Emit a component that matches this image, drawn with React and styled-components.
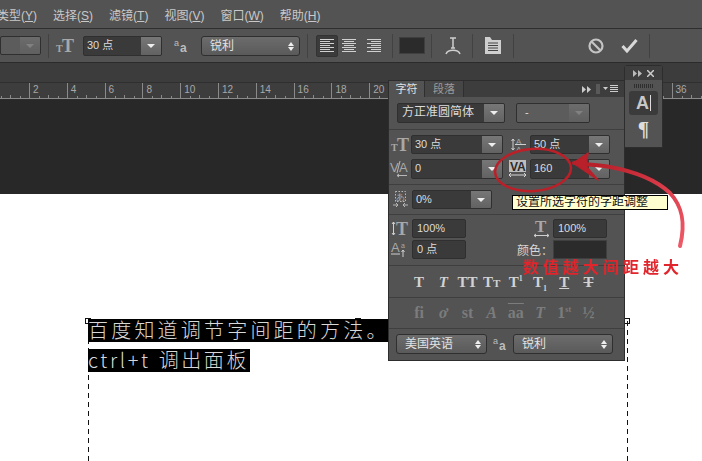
import React from 'react';
import styled, { createGlobalStyle } from 'styled-components';

const sans = '"Noto Sans CJK SC", "Liberation Sans", sans-serif';
const serif = '"Liberation Serif", "Noto Sans CJK SC", serif';

const Global = createGlobalStyle`
  html, body { margin: 0; padding: 0; background: #fff; }
  * { box-sizing: border-box; }
`;

const Stage = styled.div`
  position: relative;
  width: 702px;
  height: 461px;
  overflow: hidden;
  display: flex;
  flex-direction: column;
  font-family: "Liberation Sans", ${sans};
  font-size: 11px;
  color: #d6d6d6;
`;

const MenuBar = styled.div`
  height: 29px;
  flex: none;
  display: flex;
  align-items: center;
  gap: 16px;
  padding-left: 0;
  background: #535353;
  border-bottom: 1px solid #2e2e2e;
  color: #c9c9c9;
  font-size: 12px;
`;

const MenuItem = styled.span`
  white-space: nowrap;
  &:first-child { margin-left: -3px; }
  u { text-underline-offset: 1px; }
`;

const Options = styled.div`
  height: 34px;
  flex: none;
  display: flex;
  align-items: center;
  background: #535353;
  border-bottom: 1px solid #2b2b2b;
`;

const Sep = styled.div`
  width: 1px;
  height: 24px;
  flex: none;
  margin-left: ${p => p.$ml}px;
  background: #424242;
`;

const OptSlot = styled.div`
  flex: none;
  margin-left: ${p => p.$ml || 0}px;
  display: flex;
  align-items: center;
`;

const Field = styled.div`
  flex: none;
  display: flex;
  align-items: stretch;
  width: ${p => p.$w}px;
  height: ${p => p.$h || 19}px;
  margin-left: ${p => p.$ml || 0}px;
  background: ${p => p.$muted ? '#5c5c5c' : '#3a3a3a'};
  border: 1px solid #2f2f2f;
  border-radius: 2px;
  color: #dcdcdc;
  font-size: 11px;
  overflow: hidden;
`;

const FieldText = styled.span`
  flex: 1;
  min-width: 0;
  padding-left: ${p => p.$pad || 3}px;
  line-height: 17px;
  white-space: nowrap;
  font-size: ${p => p.$size || 11}px;
`;

const DropButton = styled.span`
  flex: none;
  width: ${p => p.$w || 20}px;
  display: flex;
  align-items: center;
  justify-content: center;
  background: linear-gradient(#777, #626262);
  opacity: ${p => p.$dim ? 0.6 : 1};
  &::after {
    content: "";
    border-left: 4px solid transparent;
    border-right: 4px solid transparent;
    border-top: 4px solid ${p => p.$dim ? '#999' : '#eee'};
  }
`;

const SelectBox = styled.div`
  flex: none;
  position: relative;
  width: ${p => p.$w}px;
  height: ${p => p.$h || 20}px;
  margin-left: ${p => p.$ml || 0}px;
  padding-left: ${p => p.$pad || 8}px;
  background: linear-gradient(#6c6c6c, #5a5a5a);
  border: 1px solid #2f2f2f;
  border-radius: 3px;
  color: #e2e2e2;
  font-size: 12px;
  line-height: 18px;
  white-space: nowrap;
  &::before, &::after {
    content: "";
    position: absolute;
    right: 5px;
    border-left: 3px solid transparent;
    border-right: 3px solid transparent;
  }
  &::before { top: 5px; border-bottom: 4px solid #eee; }
  &::after { top: 10px; border-top: 4px solid #eee; }
`;

const AlignButton = styled.div`
  flex: none;
  width: ${p => p.$active ? 22 : 17}px;
  height: 22px;
  margin-left: ${p => p.$ml || 0}px;
  display: flex;
  align-items: center;
  justify-content: center;
  border-radius: 2px;
  background: ${p => p.$active ? '#3b3b3b' : 'transparent'};
  border: ${p => p.$active ? '1px solid #333' : 'none'};
`;

const Swatch = styled.div`
  flex: none;
  width: ${p => p.$w}px;
  height: ${p => p.$h}px;
  margin-left: ${p => p.$ml || 0}px;
  background: #2b2b2b;
  border: 1px solid #3f3f3f;
`;

const Tabstrip = styled.div`
  height: 19px;
  flex: none;
  background: #3c3c3c;
`;

const Ruler = styled.div`
  height: 18px;
  flex: none;
  display: flex;
  overflow: hidden;
  background: #3d3d3d;
  border-top: 1px solid #2f2f2f;
  border-bottom: 1px solid #2b2b2b;
`;

const RulerCell = styled.div`
  flex: none;
  width: 37.8px;
  height: 16px;
  padding-left: 3px;
  border-left: 1px solid #8a8a8a;
  font-size: 10px;
  line-height: 13px;
  color: #a8a8a8;
  background-image: linear-gradient(#8a8a8a, #8a8a8a), linear-gradient(#8a8a8a, #8a8a8a), linear-gradient(#8a8a8a, #8a8a8a), linear-gradient(#8a8a8a, #8a8a8a);
  background-size: 1px 3px, 1px 4px, 1px 3px, 100% 1px;
  background-position: 9px 13px, 18px 12px, 28px 13px, 0 15px;
  background-repeat: no-repeat;
  &:first-child { margin-left: -8.8px; }
`;

const Canvas = styled.div`
  height: 94px;
  flex: none;
  background: #282828;
`;

const Doc = styled.div`
  flex: 1;
  position: relative;
  background: #fff;
`;

const dashes = 'repeating-linear-gradient(#111 0 5px, transparent 5px 9px)';

const Frame = styled.div`
  position: absolute;
  left: 88px;
  top: 127px;
  width: 540px;
  height: 160px;
  &::before, &::after {
    content: "";
    position: absolute;
    top: 0;
    bottom: 0;
    width: 1px;
    background: ${dashes};
  }
  &::before { left: 0; }
  &::after { right: 0; }
`;

const Handle = styled.i`
  position: absolute;
  top: -3px;
  left: ${p => p.$x}px;
  width: 6px;
  height: 6px;
  background: #fff;
  border: 1px solid #111;
`;

const Selected = styled.div`
  position: absolute;
  left: 0;
  top: ${p => p.$top}px;
  width: ${p => p.$w}px;
  height: 23px;
  background: #000;
  color: #d8d8d8;
  font-family: ${sans};
  font-weight: 300;
  font-size: 20px;
  line-height: 22px;
  letter-spacing: ${p => p.$track}px;
  word-spacing: ${p => p.$word || 0}px;
  white-space: nowrap;
`;

const Panel = styled.div`
  position: absolute;
  left: 388px;
  top: 80px;
  width: 237px;
  height: 281px;
  background: #535353;
  border: 1px solid #2d2d2d;
  border-top: none;
  display: flex;
  flex-direction: column;
`;

const PanelTabs = styled.div`
  height: 17px;
  flex: none;
  display: flex;
  align-items: stretch;
  background: #3d3d3d;
  border-top: 1px solid #2d2d2d;
`;

const PanelTab = styled.div`
  width: ${p => p.$w}px;
  text-align: center;
  line-height: 16px;
  font-size: 11px;
  color: ${p => p.$active ? '#e2e2e2' : '#9a9a9a'};
  background: ${p => p.$active ? '#535353' : '#464646'};
  border-right: 1px solid #2f2f2f;
`;

const TabTools = styled.div`
  margin-left: auto;
  display: flex;
  align-items: center;
  gap: 5px;
  padding-right: 4px;
`;

const Section = styled.div`
  flex: none;
  display: flex;
  flex-direction: column;
  gap: ${p => p.$gap || 0}px;
  padding: ${p => p.$top}px 0 ${p => p.$bottom}px ${p => p.$left || 0}px;
  border-bottom: ${p => p.$last ? 'none' : '1px solid #3f3f3f'};
`;

const Row = styled.div`
  display: flex;
  align-items: center;
  height: ${p => p.$h || 19}px;
`;

const IconSlot = styled.div`
  flex: none;
  width: 16px;
  height: 18px;
  margin-left: ${p => p.$ml || 0}px;
  display: flex;
  align-items: center;
  justify-content: center;
`;

const PanelLabel = styled.span`
  flex: none;
  width: 36px;
  margin-left: ${p => p.$ml}px;
  font-size: 12px;
  color: #d8d8d8;
  white-space: nowrap;
`;

const GlyphRow = styled.div`
  display: flex;
  height: 15px;
  padding-left: ${p => p.$left}px;
`;

const Glyph = styled.span`
  flex: none;
  width: 24.2px;
  text-align: center;
  font-family: ${serif};
  font-weight: 700;
  font-style: ${p => p.$italic ? 'italic' : 'normal'};
  font-size: ${p => p.$dim ? 16 : 15}px;
  line-height: 15px;
  color: ${p => p.$dim ? '#7c7c7c' : '#d2d2d2'};
  text-decoration: ${p => p.$deco || 'none'};
  white-space: nowrap;
  sup, sub { font-size: 8px; line-height: 0; }
  small { font-size: 11px; }
`;

const Dock = styled.div`
  position: absolute;
  left: 624px;
  top: 65px;
  width: 39px;
  height: 83px;
  display: flex;
  flex-direction: column;
  align-items: center;
  background: #535353;
  border: 1px solid #2d2d2d;
  border-radius: 3px 3px 0 0;
`;

const DockHead = styled.div`
  width: 100%;
  height: 14px;
  flex: none;
  display: flex;
  align-items: center;
  justify-content: space-between;
  padding: 0 8px;
  background: #3e3e3e;
`;

const Grip = styled.div`
  width: 20px;
  height: 4px;
  margin-top: 4px;
  flex: none;
  background: repeating-linear-gradient(90deg, #2e2e2e 0 1px, transparent 1px 2px);
`;

const DockButton = styled.div`
  width: 29px;
  height: 24px;
  margin-top: 3px;
  flex: none;
  display: flex;
  align-items: center;
  justify-content: center;
  background: #3b3b3b;
  border-radius: 3px;
  color: #c8c8c8;
  font-size: 18px;
  font-weight: 700;
  span { border-right: 1px solid #ddd; padding-right: 1px; line-height: 16px; }
`;

const DockPara = styled.div`
  margin-top: 3px;
  color: #dcdcdc;
  font-family: ${serif};
  font-weight: 700;
  font-size: 21px;
  line-height: 22px;
`;

const Tooltip = styled.div`
  position: absolute;
  left: 512px;
  top: 195px;
  width: 156px;
  height: 15px;
  padding-left: 3px;
  background: #ffffcf;
  border: 1px solid #000;
  color: #111;
  font-size: 12px;
  line-height: 13px;
  white-space: nowrap;
`;

const Ink = styled.svg`
  position: absolute;
  left: 0;
  top: 0;
  pointer-events: none;
  filter: blur(0.4px);
`;

const Note = styled.div`
  position: absolute;
  left: 523px;
  top: 256px;
  color: #e0262c;
  font-size: 16px;
  font-weight: 700;
  line-height: 24px;
  letter-spacing: 4px;
  white-space: nowrap;
  filter: blur(0.5px);
`;

const IconSvg = styled.svg`
  display: block;
  overflow: visible;
  text {
    font-family: ${serif};
    font-weight: 700;
    fill: ${p => p.$fill || '#a8a8a8'};
  }
`;

const thinSans = { fontFamily: '"Liberation Sans"', fontWeight: 400 };

const SizeIcon = () => (
  <IconSvg width="17" height="16">
    <text x="0" y="14" fontSize="10">T</text>
    <text x="6" y="14" fontSize="18">T</text>
  </IconSvg>
);

const LeadingIcon = () => (
  <IconSvg width="17" height="17" fill="none" stroke="#cfcfcf">
    <text x="6" y="8" fontSize="8" stroke="none" style={thinSans}>A</text>
    <text x="6" y="16" fontSize="8" stroke="none" style={thinSans}>A</text>
    <path d="M3 3v11M1.500 5L3 3l1.500 2M1.500 12L3 14l1.500-2M5 8.500h11" />
  </IconSvg>
);

const KernIcon = () => (
  <IconSvg width="18" height="18" fill="none" stroke="#b8b8b8">
    <text x="0" y="12" fontSize="13" stroke="none" style={thinSans}>V</text>
    <text x="9" y="12" fontSize="13" stroke="none" style={thinSans}>A</text>
    <path d="M10 1L7 13M7 15.500h10M9 14l-2 1.500L9 17" />
  </IconSvg>
);

const TrackIcon = () => (
  <IconSvg width="18" height="18" fill="none" stroke="#d8d8d8">
    <rect x="0" y="0" width="17" height="12" fill="#bdbdbd" stroke="none" />
    <text x="1" y="11" fontSize="12" stroke="none" style={{ fill: '#2a2a2a', fontFamily: '"Liberation Sans"' }}>VA</text>
    <path d="M0 15h17M2 13l-2 2 2 2M15 13l2 2-2 2" />
  </IconSvg>
);

const TsumeIcon = () => (
  <IconSvg width="15" height="17" fill="none" stroke="#b8b8b8">
    <rect x="2.500" y="0.500" width="10" height="10" strokeDasharray="1.500 1.500" />
    <text x="3" y="9" fontSize="9" stroke="none" style={thinSans}>あ</text>
    <path d="M0 14h5M3 12l2 2-2 2M15 14h-5M12 12l-2 2 2 2" />
  </IconSvg>
);

const VScaleIcon = () => (
  <IconSvg width="17" height="17" fill="none" stroke="#cfcfcf">
    <path d="M2.500 2v13M1 4l1.500-2L4 4M1 13l1.500 2L4 13" />
    <text x="5" y="15" fontSize="18" stroke="none">T</text>
  </IconSvg>
);

const HScaleIcon = () => (
  <IconSvg width="17" height="18" fill="none" stroke="#cfcfcf">
    <text x="2" y="12" fontSize="17" stroke="none">T</text>
    <path d="M1 15.500h15M3 14l-2 1.500L3 17M14 14l2 1.500-2 1.500" />
  </IconSvg>
);

const BaselineIcon = () => (
  <IconSvg width="16" height="17" fill="none" stroke="#cfcfcf">
    <text x="0" y="11" fontSize="13" stroke="none" style={thinSans}>A</text>
    <text x="10" y="7" fontSize="7" stroke="none" style={thinSans}>a</text>
    <path d="M0 13h9M12 9v7M10.500 11L12 9l1.500 2" />
  </IconSvg>
);

const AaIcon = () => (
  <IconSvg width="15" height="14" $fill="#bdbdbd">
    <text x="0" y="7" fontSize="9" style={thinSans}>a</text>
    <text x="6" y="13" fontSize="12" style={{ fontFamily: '"Liberation Sans"' }}>a</text>
  </IconSvg>
);

const AlignIcon = ({ side }) => {
  const widths = [14, 10, 14, 10, 14, 10, 14];
  return (
    <svg width="15" height="14">
      {widths.map((w, i) => {
        const x = side === 'left' ? 0 : side === 'center' ? (14 - w) / 2 : 14 - w;
        return <rect key={i} x={x} y={i * 2} width={w} height="1" fill="#d0d0d0" />;
      })}
    </svg>
  );
};

const ForwardIcon = ({ color }) => (
  <svg width="9" height="7">
    <path d="M0 0l4 3.500L0 7zM5 0l4 3.500L5 7z" fill={color} />
  </svg>
);

const PanelMenuIcon = () => (
  <svg width="24" height="10">
    <path d="M1 0v10M3 0v10" stroke="#777" />
    <path d="M7 3h5l-2.500 3z" fill="#ccc" />
    <path d="M14 1.500h8M14 3.500h8M14 5.500h8M14 7.500h8" stroke="#ccc" />
  </svg>
);

const WarpIcon = () => (
  <svg width="16" height="20" fill="none" stroke="#cfcfcf">
    <path d="M5 2h6M8 2v10M6 12h4" strokeWidth="1.500" />
    <path d="M1 18c2-5 12-5 14 0" strokeWidth="1.500" />
  </svg>
);

const CharPanelIcon = () => (
  <svg width="16" height="17">
    <path d="M0 0h5l2 3h9v14H0z" fill="#cfcfcf" />
    <path d="M3 6h10M3 8.500h10M3 11h10M3 13.500h10" stroke="#444" />
  </svg>
);

const CancelIcon = () => (
  <svg width="16" height="16" fill="none" stroke="#c4c4c4" strokeWidth="2.200">
    <circle cx="8" cy="8" r="6.500" />
    <path d="M3.500 3.500l9 9" />
  </svg>
);

const CheckIcon = () => (
  <svg width="17" height="15" fill="none" stroke="#d8d8d8" strokeWidth="3">
    <path d="M1.500 8l4.500 5L15.500 2" />
  </svg>
);

const menus = [['类型', 'Y'], ['选择', 'S'], ['滤镜', 'T'], ['视图', 'V'], ['窗口', 'W'], ['帮助', 'H']];
// 22 to 34 sit under the floating panels, so they carry no label
const marks = ['', '2', '4', '6', '8', '10', '12', '14', '16', '18', '20', '', '', '', '', '', '', '', '36'];

const styleGlyphs = [
  { c: 'T' },
  { c: 'T', italic: true },
  { c: 'TT' },
  { c: <>T<small>T</small></> },
  { c: <>T<sup>1</sup></> },
  { c: <>T<sub>1</sub></> },
  { c: 'T', deco: 'underline' },
  { c: 'T', deco: 'line-through' },
];
const otGlyphs = [
  { c: 'fi' },
  { c: 'ơ', italic: true },
  { c: 'st' },
  { c: 'A', italic: true },
  { c: 'aa', deco: 'overline' },
  { c: 'T', italic: true },
  { c: <>1<sup>st</sup></> },
  { c: '½' },
];

export default function App() {
  return (
    <Stage>
      <Global />
      <MenuBar>
        {menus.map(([name, key]) => (
          <MenuItem key={key}>{name}(<u>{key}</u>)</MenuItem>
        ))}
      </MenuBar>

      <Options>
        <Field $w={41} $h={19} $muted>
          <FieldText />
          <DropButton $dim />
        </Field>
        <Sep $ml={7} />
        <OptSlot $ml={7}><SizeIcon /></OptSlot>
        <Field $w={79} $h={20} $ml={10}>
          <FieldText>30 点</FieldText>
          <DropButton />
        </Field>
        <OptSlot $ml={12}><AaIcon /></OptSlot>
        <SelectBox $w={99} $ml={12}>锐利</SelectBox>
        <Sep $ml={7} />
        <AlignButton $active $ml={8}><AlignIcon side="left" /></AlignButton>
        <AlignButton $ml={3}><AlignIcon side="center" /></AlignButton>
        <AlignButton $ml={8}><AlignIcon side="right" /></AlignButton>
        <Sep $ml={9} />
        <Swatch $w={26} $h={17} $ml={6} />
        <Sep $ml={6} />
        <OptSlot $ml={13}><WarpIcon /></OptSlot>
        <Sep $ml={11} />
        <OptSlot $ml={12}><CharPanelIcon /></OptSlot>
        <Sep $ml={12} />
        <OptSlot $ml={74}><CancelIcon /></OptSlot>
        <OptSlot $ml={17}><CheckIcon /></OptSlot>
        <Sep $ml={11} />
      </Options>

      <Tabstrip />

      <Ruler>
        {marks.map((m, i) => (
          <RulerCell key={i}>{m}</RulerCell>
        ))}
      </Ruler>

      <Canvas />

      <Doc>
        <Frame>
          <Handle $x={-3} />
          <Handle $x={267} />
          <Handle $x={536} />
          <Selected $top={-2} $w={300} $track={3.2}>百度知道调节字间距的方法。</Selected>
          <Selected $top={28} $w={162} $track={2.6} $word={1}>ctrl+t 调出面板</Selected>
        </Frame>
      </Doc>

      <Panel>
        <PanelTabs>
          <PanelTab $active $w={36}>字符</PanelTab>
          <PanelTab $w={39}>段落</PanelTab>
          <TabTools>
            <ForwardIcon color="#ccc" />
            <PanelMenuIcon />
          </TabTools>
        </PanelTabs>

        <Section $top={6} $bottom={6} $left={8}>
          <Row $h={20}>
            <Field $w={108} $h={20}>
              <FieldText $pad={4} $size={12}>方正准圆简体</FieldText>
              <DropButton />
            </Field>
            <Field $w={74} $h={20} $ml={11} $muted>
              <FieldText $pad={8}>-</FieldText>
              <DropButton $dim />
            </Field>
          </Row>
        </Section>

        <Section $top={5} $bottom={5} $left={2} $gap={5}>
          <Row>
            <IconSlot><SizeIcon /></IconSlot>
            <Field $w={92} $ml={4}><FieldText>30 点</FieldText><DropButton /></Field>
            <IconSlot $ml={7}><LeadingIcon /></IconSlot>
            <Field $w={80} $ml={4}><FieldText>50 点</FieldText><DropButton /></Field>
          </Row>
          <Row $h={20}>
            <IconSlot><KernIcon /></IconSlot>
            <Field $w={92} $h={20} $ml={4}><FieldText>0</FieldText><DropButton /></Field>
            <IconSlot $ml={7}><TrackIcon /></IconSlot>
            <Field $w={80} $h={20} $ml={4}><FieldText>160</FieldText><DropButton /></Field>
          </Row>
        </Section>

        <Section $top={5} $bottom={5} $left={3}>
          <Row>
            <IconSlot><TsumeIcon /></IconSlot>
            <Field $w={80} $ml={4}><FieldText>0%</FieldText><DropButton /></Field>
          </Row>
        </Section>

        <Section $top={4} $bottom={6} $left={2} $gap={2}>
          <Row>
            <IconSlot><VScaleIcon /></IconSlot>
            <Field $w={54} $ml={5}><FieldText $pad={4}>100%</FieldText></Field>
            <IconSlot $ml={67}><HScaleIcon /></IconSlot>
            <Field $w={54} $ml={4}><FieldText $pad={4}>100%</FieldText></Field>
          </Row>
          <Row>
            <IconSlot><BaselineIcon /></IconSlot>
            <Field $w={54} $ml={5}><FieldText $pad={4}>0 点</FieldText></Field>
            <PanelLabel $ml={51}>颜色：</PanelLabel>
            <Swatch $w={54} $h={19} />
          </Row>
        </Section>

        <Section $top={9} $bottom={7}>
          <GlyphRow $left={18}>
            {styleGlyphs.map((g, i) => (
              <Glyph key={i} $italic={g.italic} $deco={g.deco}>{g.c}</Glyph>
            ))}
          </GlyphRow>
        </Section>

        <Section $top={7} $bottom={8}>
          <GlyphRow $left={18}>
            {otGlyphs.map((g, i) => (
              <Glyph key={i} $dim $italic={g.italic} $deco={g.deco}>{g.c}</Glyph>
            ))}
          </GlyphRow>
        </Section>

        <Section $top={5} $bottom={6} $left={7} $last>
          <Row $h={20}>
            <SelectBox $w={91}>美国英语</SelectBox>
            <OptSlot $ml={6}><AaIcon /></OptSlot>
            <SelectBox $w={100} $ml={5}>锐利</SelectBox>
          </Row>
        </Section>
      </Panel>

      <Dock>
        <DockHead>
          <ForwardIcon color="#bbb" />
          <svg width="7" height="7" stroke="#ccc" strokeWidth="1.500"><path d="M0 0l7 7M7 0L0 7" /></svg>
        </DockHead>
        <Grip />
        <DockButton><span>A</span></DockButton>
        <DockPara>¶</DockPara>
      </Dock>

      <Tooltip>设置所选字符的字距调整</Tooltip>

      <Ink width="702" height="461" fill="none">
        <defs>
          <linearGradient id="tail" gradientUnits="userSpaceOnUse" x1="680" y1="247" x2="600" y2="165">
            <stop offset="0" stopColor="#ee5a68" />
            <stop offset="0.5" stopColor="#d93a48" />
            <stop offset="1" stopColor="#b8202a" />
          </linearGradient>
        </defs>
        <ellipse cx="533" cy="170" rx="38" ry="21" stroke="#bb2029" strokeWidth="2.500" transform="rotate(-4 533 170)" />
        <path d="M680 246C686 222 682 206 670 193C655 179 632 171 610 167C596 165 584 164 574 163" stroke="url(#tail)" strokeWidth="4" strokeLinecap="round" />
        <path d="M588 153L573 163L598 180L586 166Z" fill="#b8202a" stroke="#b8202a" strokeWidth="1.500" strokeLinejoin="round" />
      </Ink>

      <Note>数值越大间距越大</Note>
    </Stage>
  );
}
